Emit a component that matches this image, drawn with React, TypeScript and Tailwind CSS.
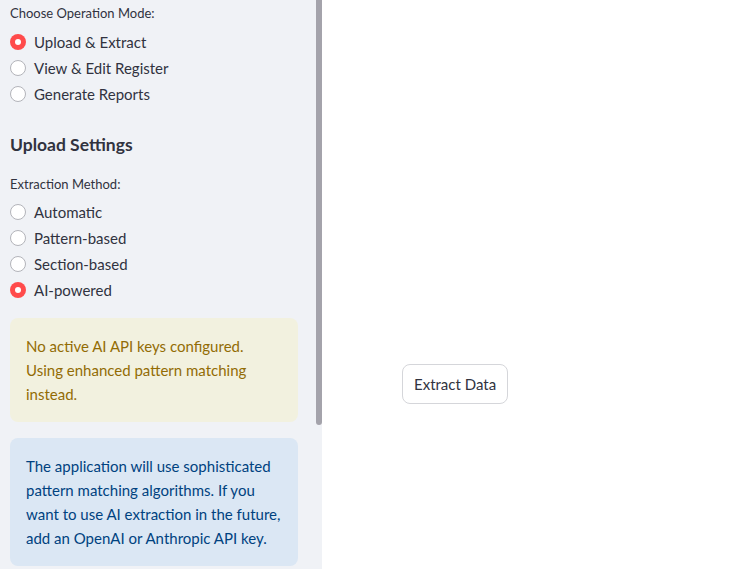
import React from 'react'

const opModes = [
  { label: 'Upload & Extract', on: true },
  { label: 'View & Edit Register', on: false },
  { label: 'Generate Reports', on: false },
]

const methods = [
  { label: 'Automatic', on: false },
  { label: 'Pattern-based', on: false },
  { label: 'Section-based', on: false },
  { label: 'AI-powered', on: true },
]

function Radio({ label, on }: { label: string; on: boolean }) {
  return (
    <div className="flex h-[26px] items-center gap-2">
      {on ? (
        <span className="flex h-4 w-4 items-center justify-center rounded-full bg-[#ff4b4b]">
          <span className="h-[6px] w-[6px] rounded-full bg-white" />
        </span>
      ) : (
        <span className="h-4 w-4 rounded-full border border-[#b3b4ba] bg-white" />
      )}
      <span className="text-[15px] leading-6 text-[#31333f]">{label}</span>
    </div>
  )
}

export default function App() {
  return (
    <div className="flex h-[569px] w-[736px] overflow-hidden bg-white font-['Lato',sans-serif]">
      {/* sidebar */}
      <aside className="flex w-[322px] shrink-0 bg-[#f0f2f6]">
        <div className="w-[316px] pl-[10px] pr-[18px] pt-[3px]">
          <p className="text-[13px] leading-5 text-[#31333f]">Choose Operation Mode:</p>
          <div className="mt-[6px]">
            {opModes.map((m) => (
              <Radio key={m.label} {...m} />
            ))}
          </div>

          <h2 className="mt-[24px] text-[17.5px] font-bold leading-7 text-[#31333f]">Upload Settings</h2>

          <p className="mt-[15px] text-[13px] leading-5 text-[#31333f]">Extraction Method:</p>
          <div className="mt-[5px]">
            {methods.map((m) => (
              <Radio key={m.label} {...m} />
            ))}
          </div>

          <div className="mt-[15px] rounded-lg bg-[#f2f1df] px-4 py-4 text-[15px] leading-6 text-[#926c05]">
            No active AI API keys configured. Using enhanced pattern matching instead.
          </div>

          <div className="mt-4 rounded-lg bg-[#dbe7f4] px-4 py-4 text-[15px] leading-6 text-[#004280]">
            The application will use sophisticated pattern matching algorithms. If you want to use AI
            extraction in the future, add an OpenAI or Anthropic API key.
          </div>
        </div>
        <div className="w-[6px]">
          <div className="h-[425px] w-[6px] rounded-b-[3px] bg-[#a4a3ab]" />
        </div>
      </aside>

      {/* main */}
      <main className="flex-1 pl-[80px] pt-[364px]">
        <button className="h-10 rounded-lg border border-[#d5d6da] bg-white px-[11px] text-[15px] text-[#31333f]">
          Extract Data
        </button>
      </main>
    </div>
  )
}
